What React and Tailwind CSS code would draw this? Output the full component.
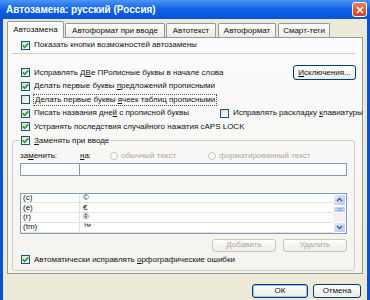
import React from 'react';

const font = { fontFamily: '"Liberation Sans", Arial, sans-serif' };

function Check({ checked }) {
  return (
    <span className="w-[9px] h-[9px] border border-[#1c5180] bg-linear-to-br from-[#dcdcd7] to-white flex items-center justify-center shrink-0">
      {checked && (
        <svg width="7" height="7" viewBox="0 0 7 7">
          <path d="M0.8 3.4 L2.7 5.3 L6.3 1.4" stroke="#21a121" strokeWidth="1.7" fill="none" />
        </svg>
      )}
    </span>
  );
}

function Row({ checked, children, className = '' }) {
  return (
    <div className={`flex items-center gap-[4px] ${className}`}>
      <Check checked={checked} />
      <span className="whitespace-nowrap">{children}</span>
    </div>
  );
}

function Radio({ children }) {
  return (
    <div className="flex items-center gap-[3px] text-[#aca899]">
      <span className="w-[8px] h-[8px] rounded-full border border-[#cac8bb] bg-white shrink-0" />
      <span className="whitespace-nowrap">{children}</span>
    </div>
  );
}

function XpButton({ children, disabled, focused, className = '' }) {
  return (
    <div
      className={`flex items-center justify-center rounded-[3px] border bg-linear-to-b from-white to-[#ecebe6] ${
        disabled ? 'border-[#c9c7ba] text-[#aca899]' : 'border-[#003c74] text-[#111]'
      } ${focused ? 'shadow-[inset_0_0_0_1px_#9fc0f5]' : ''} ${className}`}
    >
      {children}
    </div>
  );
}

export default function App() {
  const rows = [
    ['(c)', '©'],
    ['(e)', '€'],
    ['(r)', '®'],
    ['(tm)', '™'],
  ];

  return (
    <div className="w-[370px] h-[300px] bg-[#0b52d0] flex flex-col text-[8px] leading-none overflow-hidden" style={font}>
      {/* title bar */}
      <div className="h-[19px] shrink-0 flex items-center justify-between pl-[6px] pr-[3px] bg-linear-to-b from-[#4a95f4] via-[#0d60e4] to-[#0654d8]">
        <span className="text-white font-bold text-[10px]">Автозамена: русский (Россия)</span>
        <div className="w-[15px] h-[15px] rounded-[3px] border border-white bg-linear-to-b from-[#ee7a5a] to-[#d2401c] flex items-center justify-center">
          <svg width="8" height="8" viewBox="0 0 8 8">
            <path d="M1 1 L7 7 M7 1 L1 7" stroke="white" strokeWidth="1.7" />
          </svg>
        </div>
      </div>

      {/* body */}
      <div className="flex-1 mx-[3px] bg-[#ece9d8] flex flex-col text-[#111]">
        {/* tabs */}
        <div className="flex items-end pl-[4px] pt-[2px] h-[18px] shrink-0">
          <div className="w-[57px] h-[17px] relative z-10 -mb-px bg-[#fcfcfe] border border-b-0 border-[#919b9c] rounded-t-[2px] flex items-center justify-center">
            Автозамена
          </div>
          <div className="w-[100px] h-[14px] ml-px bg-linear-to-b from-white to-[#ecebe6] border border-b-0 border-[#919b9c] rounded-t-[2px] flex items-center justify-center">
            Автоформат при вводе
          </div>
          <div className="w-[50px] h-[14px] ml-px bg-linear-to-b from-white to-[#ecebe6] border border-b-0 border-[#919b9c] rounded-t-[2px] flex items-center justify-center">
            Автотекст
          </div>
          <div className="w-[58px] h-[14px] ml-[2px] bg-linear-to-b from-white to-[#ecebe6] border border-b-0 border-[#919b9c] rounded-t-[2px] flex items-center justify-center">
            Автоформат
          </div>
          <div className="w-[52px] h-[14px] ml-[2px] bg-linear-to-b from-white to-[#ecebe6] border border-b-0 border-[#919b9c] rounded-t-[2px] flex items-center justify-center">
            Смарт-теги
          </div>
        </div>

        {/* panel */}
        <div className="ml-[4px] mr-[4px] h-[237px] shrink-0 border border-[#919b9c] bg-linear-to-b from-[#fcfcfe] to-[#f4f3ee] flex flex-col">
          <Row checked className="h-[12px] mt-[1px] pl-[13px]">Показать кнопки возможностей автозамены</Row>
          <div className="h-px bg-[#d0d0bf] ml-[4px] mr-[7px] mt-[2px]" />

          <div className="mt-[12px] flex flex-col">
            <div className="h-[13.5px] flex items-center justify-between pl-[13px] pr-[6px]">
              <Row checked>
                Исправлять Д<u>В</u>е ПРописные буквы в начале слова
              </Row>
              <XpButton className="w-[63px] h-[15px]">
                <u>И</u>сключения...
              </XpButton>
            </div>
            <Row checked className="h-[13.5px] pl-[13px]">
              Делать первые буквы <u>п</u>редложений прописными
            </Row>
            <div className="h-[13.5px] flex items-center gap-[3px] pl-[13px]">
              <Check />
              <span className="whitespace-nowrap border border-dotted border-[#555] px-[1px] py-[1px]">
                Делать первые буквы <u>я</u>чеек таблиц прописными
              </span>
            </div>
            <div className="h-[13.5px] flex items-center pl-[13px]">
              <Row checked className="w-[199px] shrink-0">
                Писать названия дне<u>й</u> с прописной буквы
              </Row>
              <Row>
                Исправлять раскладку <u>к</u>лавиатуры
              </Row>
            </div>
            <Row checked className="h-[13.5px] pl-[13px]">
              Устранять после<u>д</u>ствия случайного нажатия cAPS LOCK
            </Row>
          </div>

          {/* group */}
          <fieldset className="mt-[1px] ml-[4px] mr-[7px] border border-[#d0d0bf] rounded-[3px] pl-[7px] pr-[7px] pb-[4px]">
            <legend className="px-[1px]">
              <Row checked className="h-[12px]">
                <u>З</u>аменять при вводе
              </Row>
            </legend>
            <div className="h-[12px] mt-[3px] flex items-center">
              <div className="w-[60px] shrink-0">за<u>м</u>енить:</div>
              <div className="w-[30px] shrink-0"><u>н</u>а:</div>
              <div className="w-[98px] shrink-0">
                <Radio>обычный текст</Radio>
              </div>
              <Radio>форматированный текст</Radio>
            </div>
            <div className="mt-px h-[13px] flex">
              <div className="w-[60px] shrink-0 border border-[#7f9db9] bg-white" />
              <div className="flex-1 border border-l-0 border-[#7f9db9] bg-white" />
            </div>

            <div className="mt-[17px] h-[41px] border border-[#7f9db9] bg-white flex">
              <div className="flex-1 flex flex-col">
                {rows.map(([a, b]) => (
                  <div key={a} className="h-[10px] flex border-b border-[#e3e2dc]">
                    <span className="w-[59px] shrink-0 pl-[2px] flex items-center border-r border-[#e3e2dc]">{a}</span>
                    <span className="pl-[3px] flex items-center">{b}</span>
                  </div>
                ))}
              </div>
              {/* scrollbar */}
              <div className="w-[13px] bg-[#f3f1ec] flex flex-col">
                <div className="h-[12px] rounded-[2px] bg-linear-to-br from-[#e1eafe] to-[#b4c8f6] border border-white flex items-center justify-center">
                  <svg width="7" height="5" viewBox="0 0 7 5">
                    <path d="M1 4 L3.5 1.5 L6 4" stroke="#4d6185" strokeWidth="1.5" fill="none" />
                  </svg>
                </div>
                <div className="h-[7px] rounded-[2px] bg-linear-to-r from-[#c9d8fc] to-[#b4c8f6] border border-white flex flex-col justify-center gap-px px-[3px]">
                  <div className="h-px bg-[#8aa7e8]" />
                  <div className="h-px bg-[#8aa7e8]" />
                </div>
                <div className="flex-1" />
                <div className="h-[11px] rounded-[2px] bg-linear-to-br from-[#e1eafe] to-[#b4c8f6] border border-white flex items-center justify-center">
                  <svg width="7" height="5" viewBox="0 0 7 5">
                    <path d="M1 1 L3.5 3.5 L6 1" stroke="#4d6185" strokeWidth="1.5" fill="none" />
                  </svg>
                </div>
              </div>
            </div>

            <div className="mt-[5px] flex justify-end gap-[7px]">
              <XpButton disabled className="w-[64px] h-[13px]">Добавить</XpButton>
              <XpButton disabled className="w-[64px] h-[13px]">Удалить</XpButton>
            </div>

            <Row checked className="h-[12px] mt-[2px] pl-px">
              Автоматически исправлять <u>о</u>рфографические ошибки
            </Row>
          </fieldset>
        </div>

        {/* dialog buttons */}
        <div className="mt-[10px] flex justify-end gap-[5px] pr-[6px]">
          <XpButton focused className="w-[56px] h-[14px]">ОК</XpButton>
          <XpButton className="w-[48px] h-[14px]">Отмена</XpButton>
        </div>
      </div>
    </div>
  );
}
